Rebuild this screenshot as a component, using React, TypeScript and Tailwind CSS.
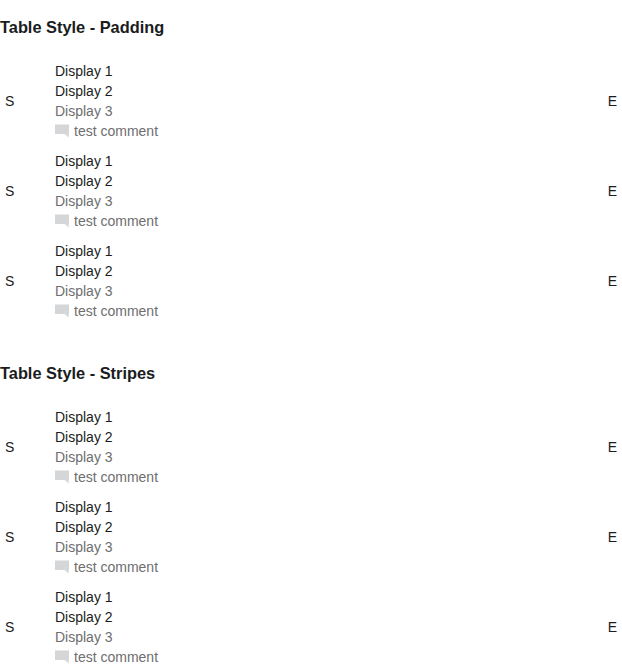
function Row() {
  return (
    <li className="flex h-[90px] items-center px-[5px]">
      <div className="w-[50px]">S</div>
      <div className="flex-1 leading-5">
        <div>Display 1</div>
        <div>Display 2</div>
        <div className="text-[#6e6e6e]">Display 3</div>
        <div className="flex items-center text-[#6e6e6e]">
          <svg className="mr-[5px] h-[14px] w-[14px]" viewBox="0 0 14 14" fill="#d5d6d8">
            <path d="M0 .5h14v9.5h-.3v3.4L9.7 10H0z" />
          </svg>
          test comment
        </div>
      </div>
      <div>E</div>
    </li>
  );
}

function Section({ title }: { title: string }) {
  return (
    <section className="h-[346px]">
      <h2 className="pt-[17px] text-[16.38px] leading-5 font-bold">{title}</h2>
      <ul className="mt-[19px] text-[14px]">
        <Row />
        <Row />
        <Row />
      </ul>
    </section>
  );
}

export default function App() {
  return (
    <main className="h-[672px] overflow-hidden bg-white font-['Liberation_Sans',Arial,sans-serif] text-[#1a1c20]">
      <Section title="Table Style - Padding" />
      <Section title="Table Style - Stripes" />
    </main>
  );
}
